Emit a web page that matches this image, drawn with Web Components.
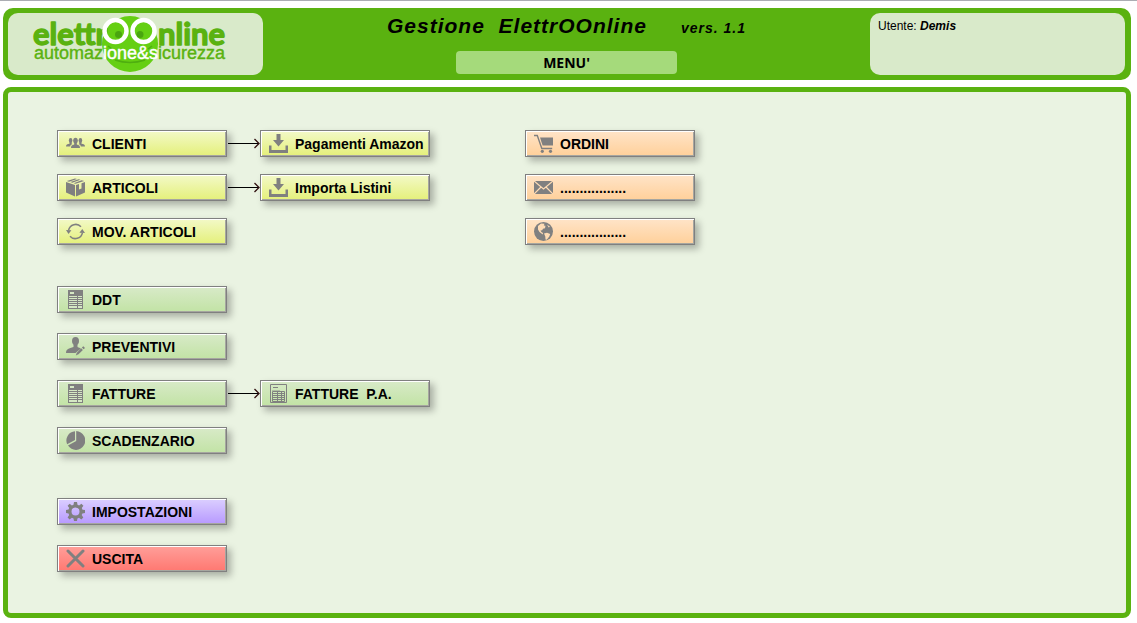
<!DOCTYPE html>
<html lang="it">
<head>
<meta charset="utf-8">
<title>Gestione ElettrOOnline</title>
<style>
  body {
    margin: 0;
    min-height: 100vh;
    box-sizing: border-box;
    border-top: 1px solid #abadb3;
    background: #fff;
    color: #000;
    font-family: "Liberation Sans", Arial, sans-serif;
    display: flex;
  }
</style>
</head>
<body>
<gestione-app></gestione-app>

<script>
const ICONS = {
  clients: `<g><ellipse cx="9.5" cy="6.6" rx="2.3" ry="2.9"/><path d="M5 14c0-2.300 1-2.800 3.200-3.400V9h2.600v1.600c2.200.6 3.200 1.100 3.200 3.400z"/><ellipse cx="4.600" cy="6.400" rx="1.800" ry="2.300"/><path d="M0 12.500c0-1.900 1.300-2.400 3.500-2.800V8h2.200v1.700l.9.300C4.800 10.700 4.300 11.300 4.200 12.500z"/><ellipse cx="14.400" cy="6.400" rx="1.800" ry="2.300"/><path d="M19 12.500c0-1.900-1.300-2.400-3.500-2.800V8h-2.200v1.700l-.9.300c1.800.7 2.300 1.300 2.400 2.500z"/></g>`,
  box: `<path d="M0 4l9 3v11.500L0 14.500zM10 7l3-1v5.500l2.500-1V5.200L19 4v10.500l-9 4zM.8 3L9 .4l2 .5L3 3.800zM4.300 4.100l8.200-2.800 2 .5-8.200 3zM7.600 5.200l8-2.900 2.600.8-8.700 2.700z"/>`,
  sync: `<path fill="none" stroke="#808080" stroke-width="1.500" d="M2.600 8.200A7.200 7.200 0 0 1 15 4.800M16.400 10.800A7.200 7.200 0 0 1 4 14.200"/><path d="M0 8l5.400.3L2.500 12zM13.400 10.800l2.900-3.700L19 10.900z"/>`,
  download: `<path d="M7.500 0h4v6H15l-5.500 6.500L4 6h3.500zM0 11.500h2.500V16h14v-4.500H19V19H0z"/>`,
  sheet: `<path d="M2 0h15v19H2z"/><path fill="#d5e8c4" d="M4 2h4v2H4zM3 6h8v1H3zM12 6h4v1h-4zM3 8h8v1H3zM12 8h4v1h-4zM3 10h8v1H3zM12 10h4v1h-4zM3 12h8v1H3zM12 12h4v1h-4zM3 14h8v1H3zM12 14h4v1h-4zM3 16h8v2H3zM12 16h4v2h-4z"/>`,
  invoice: `<path fill="none" stroke="#808080" d="M1.500.5h16v18h-16zM4 3.500h5M3.500 7.500h12v10h-12zM4 9.500h11M4 11.500h11M4 13.500h11M4 15.500h11M8.500 8v9M12.500 8v9"/><path fill="none" stroke="#808080" stroke-opacity=".4" d="M3 6.500h8"/>`,
  quote: `<ellipse cx="9.500" cy="4" rx="3.500" ry="4"/><path d="M7.500 7h4v3c1.500.8 2.500 1 3.300 1.600L9.500 16H0c0-4 3-4.500 7.500-6zM17.300 9.200l1.700 1.700-1.400 1.400-1.700-1.700zM15.200 11.200l1.700 1.700-4.400 4.400-2.700 1.200 1-2.800z"/>`,
  pie: `<path d="M9 9V.2A9.400 9.400 0 0 0 1.100 13.200zM10.200.1V10L2 14.600A9.400 9.400 0 1 0 10.200.1z"/>`,
  gear: `<path fill-rule="evenodd" d="M8 0h3l.5 2.700 1.600.7 2.300-1.600 2 2-1.600 2.300.7 1.600L19 8v3l-2.600.5-.7 1.600 1.600 2.300-2 2-2.300-1.600-1.600.7L11 19H8l-.5-2.500-1.600-.7-2.300 1.600-2-2 1.600-2.300-.7-1.600L0 11V8l2.500-.4.7-1.600-1.600-2.200 2-2 2.300 1.600 1.600-.7zM9.500 5.500a4 4 0 1 0 0 8 4 4 0 0 0 0-8z"/>`,
  cross: `<path stroke="#808080" stroke-width="3" stroke-linecap="round" d="M2 2l15 15M17 2L2 17"/>`,
  cart: `<path fill="none" stroke="#808080" stroke-width="1.400" d="M0 1.500h3.300l4.500 13h10.400"/><path d="M6 3.500h13v8H8.600z"/><circle cx="8.300" cy="17.300" r="1.600"/><circle cx="16.500" cy="17.300" r="1.600"/>`,
  mail: `<path d="M0 3h19v13H0z"/><path fill="none" stroke="#ffdcb5" stroke-width="1.200" d="M0 3l9.500 8L19 3M0 16l7-7M19 16l-7-7"/>`,
  globe: `<circle cx="9.500" cy="9.500" r="9.500"/><path fill="#ffdcb5" d="M4 4l3-2.400 3.500.2L9.800 3.500l1.700.3-.5 2.400-2 .5-.8 1.500-1.700.4.9 1.400 1.600 1-.3 1.400L5.500 10 4 7.500zM10 11.500l3-.8 3.200 1.200-.9 2.600-2.600 3.200-1.200-.3-.2-3zM13 2.500l3 2.300-1.300.8z"/>`
};

function define(name, template, setup) {
  customElements.define(name, class extends HTMLElement {
    constructor() {
      super();
      const t = document.createElement("template");
      t.innerHTML = template;
      this.attachShadow({ mode: "open" }).append(t.content.cloneNode(true));
    }
    connectedCallback() {
      if (setup) setup(this, this.shadowRoot);
    }
  });
}

define("menu-button", `
  <style>
    :host { display: block; width: 170px; --from: #f3f9c8; --to: #e4f07a; }
    :host([tone="green"]) { --from: #d8eac8; --to: #c2e3a5; }
    :host([tone="orange"]) { --from: #ffe4c8; --to: #ffd09a; }
    :host([tone="violet"]) { --from: #dbcfff; --to: #b799ff; }
    :host([tone="red"]) { --from: #ff9f9a; --to: #ff7871; }
    button {
      display: flex;
      align-items: center;
      gap: 7px;
      width: 100%;
      height: 27px;
      margin: 0;
      padding: 0 0 0 8px;
      border: 1px solid #808080;
      border-radius: 0;
      background: linear-gradient(var(--from), var(--to));
      box-shadow: inset 1px 1px #fff, inset -1px -1px #a6a6a0, 4px 4px 7px rgba(0, 0, 0, .28);
      color: #000;
      font: bold 14px/18px "Liberation Sans", Arial, sans-serif;
      text-align: left;
      white-space: pre;
      cursor: pointer;
    }
    svg { flex: none; fill: #808080; }
  </style>
  <button type="button"><svg width="19" height="19" viewBox="0 0 19 19" aria-hidden="true"></svg><span><slot></slot></span></button>
`, (host, root) => {
  root.querySelector("svg").innerHTML = ICONS[host.getAttribute("icon")] || "";
});

define("flow-arrow", `
  <style>:host { display: block; width: 33px; } svg { display: block; }</style>
  <svg width="33" height="11" viewBox="0 0 33 11" fill="none" aria-hidden="true">
    <path stroke="#000" d="M1 5.500h31"/><path stroke="#301010" stroke-width="1.300" d="M27.500 1l4.500 4.500-4.500 4.500"/>
  </svg>
`);

define("menu-row", `
  <style>:host { display: flex; align-items: center; }</style>
  <slot></slot>
`);

define("menu-group", `
  <style>
    :host { display: flex; flex-direction: column; gap: 17px; }
    :host([spacing="wide"]) { gap: 20px; }
  </style>
  <slot></slot>
`);

define("brand-logo", `
  <style>
    :host { display: block; box-sizing: border-box; height: 62px; padding-left: 20px; border-radius: 10px; background: #d9eaca; }
    svg { display: block; }
    text { font-family: "Liberation Sans", Arial, sans-serif; fill: #5ab210; }
    .name { font: 700 31px Lato, sans-serif; stroke: #5ab210; stroke-width: 1.4; stroke-linejoin: round; }
    .tag { font-size: 18px; stroke: #5ab210; stroke-width: .4; }
    .lit { fill: #fff; stroke: #fff; }
  </style>
  <svg width="216" height="62" viewBox="28 13 216 62" role="img" aria-label="elettrOOnline automazione e sicurezza">
    <circle cx="130" cy="44" r="28" fill="#65cf13"/>
    <circle cx="118.500" cy="34.500" r="3.500" fill="#4aa50f"/>
    <circle cx="140" cy="34.500" r="3.500" fill="#4aa50f"/>
    <path d="M115 60q15 5 30 0M108 46l4 3M148 49l4-3" fill="none" stroke="#4fae10" stroke-width="1.500"/>
    <text class="name" x="33" y="45">elettr</text>
    <text class="name" x="158" y="45">nline</text>
    <g fill="none" stroke="#fff" stroke-width="4.500">
      <circle cx="115.500" cy="31" r="11"/><circle cx="143.500" cy="31" r="11"/>
    </g>
    <text class="tag" x="34" y="59">automaz<tspan class="lit">ione&amp;s</tspan>icurezza</text>
  </svg>
`);

define("user-panel", `
  <style>
    :host { display: block; box-sizing: border-box; height: 62px; padding: 5px 8px; border-radius: 10px; background: #d9eaca; font-size: 12px; line-height: 16px; }
  </style>
  Utente: <b><i><slot></slot></i></b>
`);

define("app-header", `
  <style>
    :host { display: grid; grid-template-columns: 255px 1fr 255px; padding: 5px 6px 5px 5px; border-radius: 10px; background: #5ab210; }
    .middle { display: flex; flex-direction: column; align-items: center; gap: 12px; }
    h1 { display: flex; align-items: baseline; gap: 34px; height: 26px; margin: 0; font-size: 21px; line-height: 26px; font-style: italic; letter-spacing: 1px; white-space: pre; }
    small { font-size: 14px; line-height: 20px; }
    h2 { box-sizing: border-box; width: 221px; height: 23px; margin: 0; border-radius: 4px; background: #a5da7b; font: bold 14px/23px "Noto Sans", Tahoma, sans-serif; text-align: center; }
  </style>
  <brand-logo></brand-logo>
  <div class="middle">
    <h1><span>Gestione  ElettrOOnline</span><small>vers. 1.1</small></h1>
    <h2>MENU'</h2>
  </div>
  <user-panel>Demis</user-panel>
`);

define("main-menu", `
  <style>
    :host { display: flex; align-items: flex-start; gap: 95px; box-sizing: border-box; padding: 38px 49px 35px; border: 5px solid #5ab210; border-radius: 8px; background: #eaf3e2; }
    nav { display: flex; flex-direction: column; }
    .left { width: 373px; }
    .documents { margin-top: 41px; }
    .system { margin-top: 44px; }
  </style>
  <nav class="left" aria-label="Gestione">
    <menu-group>
      <menu-row><menu-button icon="clients">CLIENTI</menu-button><flow-arrow></flow-arrow><menu-button icon="download">Pagamenti Amazon</menu-button></menu-row>
      <menu-row><menu-button icon="box">ARTICOLI</menu-button><flow-arrow></flow-arrow><menu-button icon="download">Importa Listini</menu-button></menu-row>
      <menu-row><menu-button icon="sync">MOV. ARTICOLI</menu-button></menu-row>
    </menu-group>
    <menu-group class="documents" spacing="wide">
      <menu-row><menu-button tone="green" icon="sheet">DDT</menu-button></menu-row>
      <menu-row><menu-button tone="green" icon="quote">PREVENTIVI</menu-button></menu-row>
      <menu-row><menu-button tone="green" icon="sheet">FATTURE</menu-button><flow-arrow></flow-arrow><menu-button tone="green" icon="invoice">FATTURE  P.A.</menu-button></menu-row>
      <menu-row><menu-button tone="green" icon="pie">SCADENZARIO</menu-button></menu-row>
    </menu-group>
    <menu-group class="system" spacing="wide">
      <menu-row><menu-button tone="violet" icon="gear">IMPOSTAZIONI</menu-button></menu-row>
      <menu-row><menu-button tone="red" icon="cross">USCITA</menu-button></menu-row>
    </menu-group>
  </nav>
  <nav aria-label="Ordini">
    <menu-group>
      <menu-button tone="orange" icon="cart">ORDINI</menu-button>
      <menu-button tone="orange" icon="mail">.................</menu-button>
      <menu-button tone="orange" icon="globe">.................</menu-button>
    </menu-group>
  </nav>
`);

define("gestione-app", `
  <style>
    :host { flex: 1; display: flex; flex-direction: column; gap: 7px; padding: 7px 6px 5px 3px; }
    main-menu { flex: 1; }
  </style>
  <app-header></app-header>
  <main-menu></main-menu>
`);
</script>
</body>
</html>
